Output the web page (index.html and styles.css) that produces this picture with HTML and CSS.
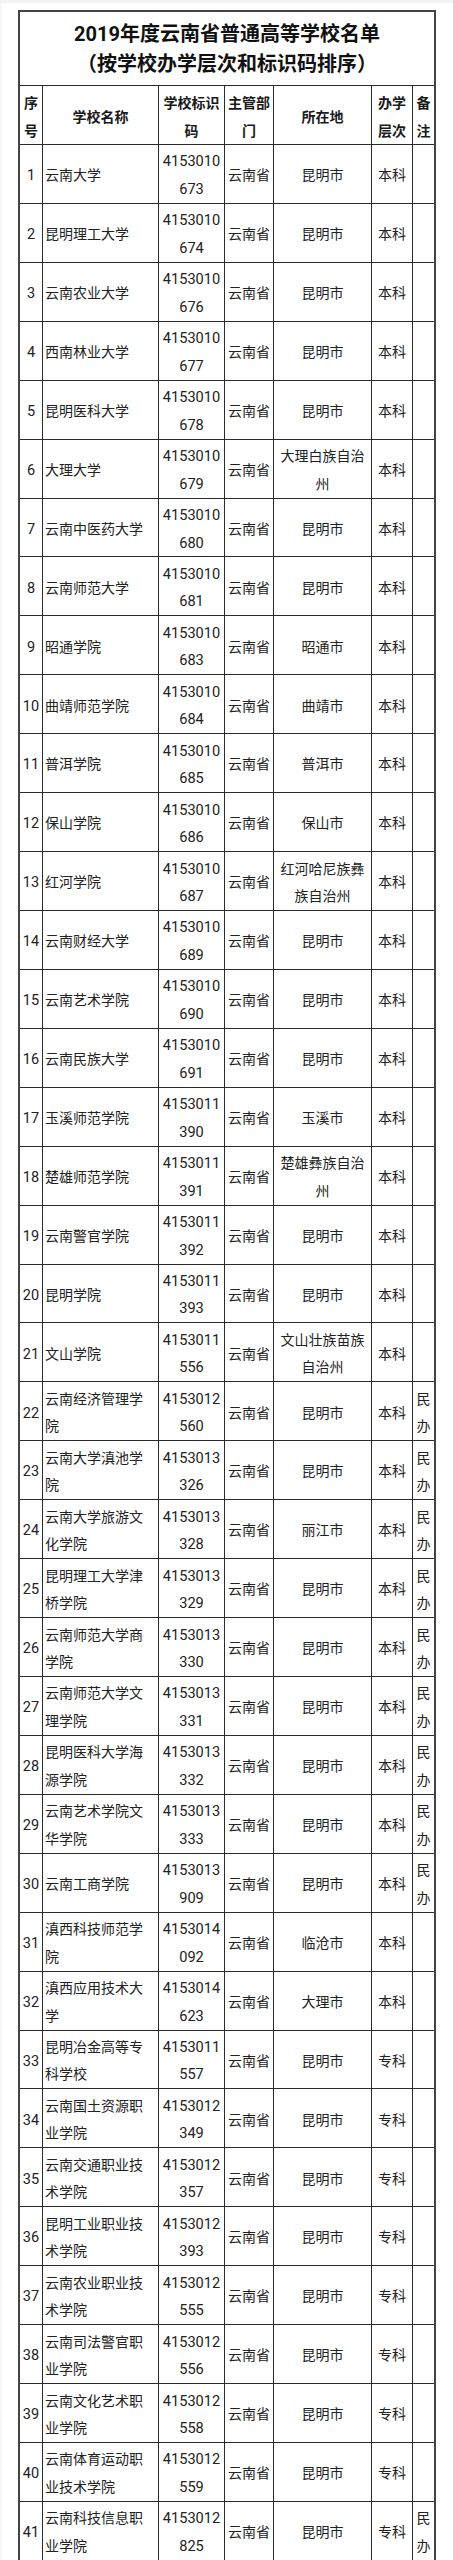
FILE: index.html
```html
<!DOCTYPE html>
<html lang="zh-CN">
<head>
<meta charset="utf-8">
<title>2019年度云南省普通高等学校名单</title>
<link rel="stylesheet" href="styles.css">
</head>
<body>
<div class="page">
<div class="sheet">
  <div class="title">2019年度云南省普通高等学校名单<br>（按学校办学层次和标识码排序）</div>

  <div class="c h">序号</div><div class="c h">学校名称</div><div class="c h">学校标识码</div><div class="c h">主管部门</div><div class="c h">所在地</div><div class="c h">办学层次</div><div class="c h">备注</div>

  <div class="c n">1</div><div class="c l">云南大学</div><div class="c code">4153010673</div><div class="c">云南省</div><div class="c">昆明市</div><div class="c">本科</div><div class="c"></div>
  <div class="c n">2</div><div class="c l">昆明理工大学</div><div class="c code">4153010674</div><div class="c">云南省</div><div class="c">昆明市</div><div class="c">本科</div><div class="c"></div>
  <div class="c n">3</div><div class="c l">云南农业大学</div><div class="c code">4153010676</div><div class="c">云南省</div><div class="c">昆明市</div><div class="c">本科</div><div class="c"></div>
  <div class="c n">4</div><div class="c l">西南林业大学</div><div class="c code">4153010677</div><div class="c">云南省</div><div class="c">昆明市</div><div class="c">本科</div><div class="c"></div>
  <div class="c n">5</div><div class="c l">昆明医科大学</div><div class="c code">4153010678</div><div class="c">云南省</div><div class="c">昆明市</div><div class="c">本科</div><div class="c"></div>
  <div class="c n">6</div><div class="c l">大理大学</div><div class="c code">4153010679</div><div class="c">云南省</div><div class="c">大理白族自治州</div><div class="c">本科</div><div class="c"></div>
  <div class="c n">7</div><div class="c l">云南中医药大学</div><div class="c code">4153010680</div><div class="c">云南省</div><div class="c">昆明市</div><div class="c">本科</div><div class="c"></div>
  <div class="c n">8</div><div class="c l">云南师范大学</div><div class="c code">4153010681</div><div class="c">云南省</div><div class="c">昆明市</div><div class="c">本科</div><div class="c"></div>
  <div class="c n">9</div><div class="c l">昭通学院</div><div class="c code">4153010683</div><div class="c">云南省</div><div class="c">昭通市</div><div class="c">本科</div><div class="c"></div>
  <div class="c n">10</div><div class="c l">曲靖师范学院</div><div class="c code">4153010684</div><div class="c">云南省</div><div class="c">曲靖市</div><div class="c">本科</div><div class="c"></div>
  <div class="c n">11</div><div class="c l">普洱学院</div><div class="c code">4153010685</div><div class="c">云南省</div><div class="c">普洱市</div><div class="c">本科</div><div class="c"></div>
  <div class="c n">12</div><div class="c l">保山学院</div><div class="c code">4153010686</div><div class="c">云南省</div><div class="c">保山市</div><div class="c">本科</div><div class="c"></div>
  <div class="c n">13</div><div class="c l">红河学院</div><div class="c code">4153010687</div><div class="c">云南省</div><div class="c">红河哈尼族彝族自治州</div><div class="c">本科</div><div class="c"></div>
  <div class="c n">14</div><div class="c l">云南财经大学</div><div class="c code">4153010689</div><div class="c">云南省</div><div class="c">昆明市</div><div class="c">本科</div><div class="c"></div>
  <div class="c n">15</div><div class="c l">云南艺术学院</div><div class="c code">4153010690</div><div class="c">云南省</div><div class="c">昆明市</div><div class="c">本科</div><div class="c"></div>
  <div class="c n">16</div><div class="c l">云南民族大学</div><div class="c code">4153010691</div><div class="c">云南省</div><div class="c">昆明市</div><div class="c">本科</div><div class="c"></div>
  <div class="c n">17</div><div class="c l">玉溪师范学院</div><div class="c code">4153011390</div><div class="c">云南省</div><div class="c">玉溪市</div><div class="c">本科</div><div class="c"></div>
  <div class="c n">18</div><div class="c l">楚雄师范学院</div><div class="c code">4153011391</div><div class="c">云南省</div><div class="c">楚雄彝族自治州</div><div class="c">本科</div><div class="c"></div>
  <div class="c n">19</div><div class="c l">云南警官学院</div><div class="c code">4153011392</div><div class="c">云南省</div><div class="c">昆明市</div><div class="c">本科</div><div class="c"></div>
  <div class="c n">20</div><div class="c l">昆明学院</div><div class="c code">4153011393</div><div class="c">云南省</div><div class="c">昆明市</div><div class="c">本科</div><div class="c"></div>
  <div class="c n">21</div><div class="c l">文山学院</div><div class="c code">4153011556</div><div class="c">云南省</div><div class="c">文山壮族苗族自治州</div><div class="c">本科</div><div class="c"></div>
  <div class="c n">22</div><div class="c l">云南经济管理学院</div><div class="c code">4153012560</div><div class="c">云南省</div><div class="c">昆明市</div><div class="c">本科</div><div class="c">民办</div>
  <div class="c n">23</div><div class="c l">云南大学滇池学院</div><div class="c code">4153013326</div><div class="c">云南省</div><div class="c">昆明市</div><div class="c">本科</div><div class="c">民办</div>
  <div class="c n">24</div><div class="c l">云南大学旅游文化学院</div><div class="c code">4153013328</div><div class="c">云南省</div><div class="c">丽江市</div><div class="c">本科</div><div class="c">民办</div>
  <div class="c n">25</div><div class="c l">昆明理工大学津桥学院</div><div class="c code">4153013329</div><div class="c">云南省</div><div class="c">昆明市</div><div class="c">本科</div><div class="c">民办</div>
  <div class="c n">26</div><div class="c l">云南师范大学商学院</div><div class="c code">4153013330</div><div class="c">云南省</div><div class="c">昆明市</div><div class="c">本科</div><div class="c">民办</div>
  <div class="c n">27</div><div class="c l">云南师范大学文理学院</div><div class="c code">4153013331</div><div class="c">云南省</div><div class="c">昆明市</div><div class="c">本科</div><div class="c">民办</div>
  <div class="c n">28</div><div class="c l">昆明医科大学海源学院</div><div class="c code">4153013332</div><div class="c">云南省</div><div class="c">昆明市</div><div class="c">本科</div><div class="c">民办</div>
  <div class="c n">29</div><div class="c l">云南艺术学院文华学院</div><div class="c code">4153013333</div><div class="c">云南省</div><div class="c">昆明市</div><div class="c">本科</div><div class="c">民办</div>
  <div class="c n">30</div><div class="c l">云南工商学院</div><div class="c code">4153013909</div><div class="c">云南省</div><div class="c">昆明市</div><div class="c">本科</div><div class="c">民办</div>
  <div class="c n">31</div><div class="c l">滇西科技师范学院</div><div class="c code">4153014092</div><div class="c">云南省</div><div class="c">临沧市</div><div class="c">本科</div><div class="c"></div>
  <div class="c n">32</div><div class="c l">滇西应用技术大学</div><div class="c code">4153014623</div><div class="c">云南省</div><div class="c">大理市</div><div class="c">本科</div><div class="c"></div>
  <div class="c n">33</div><div class="c l">昆明冶金高等专科学校</div><div class="c code">4153011557</div><div class="c">云南省</div><div class="c">昆明市</div><div class="c">专科</div><div class="c"></div>
  <div class="c n">34</div><div class="c l">云南国土资源职业学院</div><div class="c code">4153012349</div><div class="c">云南省</div><div class="c">昆明市</div><div class="c">专科</div><div class="c"></div>
  <div class="c n">35</div><div class="c l">云南交通职业技术学院</div><div class="c code">4153012357</div><div class="c">云南省</div><div class="c">昆明市</div><div class="c">专科</div><div class="c"></div>
  <div class="c n">36</div><div class="c l">昆明工业职业技术学院</div><div class="c code">4153012393</div><div class="c">云南省</div><div class="c">昆明市</div><div class="c">专科</div><div class="c"></div>
  <div class="c n">37</div><div class="c l">云南农业职业技术学院</div><div class="c code">4153012555</div><div class="c">云南省</div><div class="c">昆明市</div><div class="c">专科</div><div class="c"></div>
  <div class="c n">38</div><div class="c l">云南司法警官职业学院</div><div class="c code">4153012556</div><div class="c">云南省</div><div class="c">昆明市</div><div class="c">专科</div><div class="c"></div>
  <div class="c n">39</div><div class="c l">云南文化艺术职业学院</div><div class="c code">4153012558</div><div class="c">云南省</div><div class="c">昆明市</div><div class="c">专科</div><div class="c"></div>
  <div class="c n">40</div><div class="c l">云南体育运动职业技术学院</div><div class="c code">4153012559</div><div class="c">云南省</div><div class="c">昆明市</div><div class="c">专科</div><div class="c"></div>
  <div class="c n">41</div><div class="c l">云南科技信息职业学院</div><div class="c code">4153012825</div><div class="c">云南省</div><div class="c">昆明市</div><div class="c">专科</div><div class="c">民办</div>
</div>
</div>
</body>
</html>
```

FILE: styles.css
```css
html, body {
  margin: 0;
  padding: 0;
  background: #ffffff;
}

.page {
  border-top: 3px solid #f3f3f3;
  border-left: 2px solid #f6f6f6;
  padding: 7px 0 0 16px;
  min-height: 2560px;
  box-sizing: border-box;
}

.sheet {
  width: 418px;
  box-sizing: border-box;
  border: 2px solid #444444;
  background: #2b2b2b;
  display: grid;
  grid-template-columns: 22px 115px 65px 48px 97px 40px 21px;
  grid-template-rows: 73px 58px;
  grid-auto-rows: 57.925px;
  gap: 1px;
  font-family: Roboto, "Noto Sans CJK SC", sans-serif;
  color: #222222;
}

.title {
  grid-column: 1 / -1;
  background: #ffffff;
  display: flex;
  align-items: center;
  justify-content: center;
  text-align: center;
  font-weight: 700;
  font-size: 20px;
  line-height: 30px;
  color: #111111;
}

.c {
  background: #ffffff;
  display: flex;
  align-items: center;
  justify-content: center;
  text-align: center;
  padding: 4px 0 0 0;
  box-sizing: border-box;
  font-size: 14px;
  line-height: 27.5px;
  overflow: visible;
  min-width: 0;
}

.h {
  font-weight: 700;
  padding-top: 5px;
  color: #1a1a1a;
}

.l {
  justify-content: flex-start;
  text-align: left;
  padding-left: 2px;
  padding-right: 3px;
}

.code {
  font-size: 14.6px;
  word-break: break-all;
  padding-left: 1px;
  padding-right: 1px;
}

.n {
  font-size: 14.5px;
}
```
